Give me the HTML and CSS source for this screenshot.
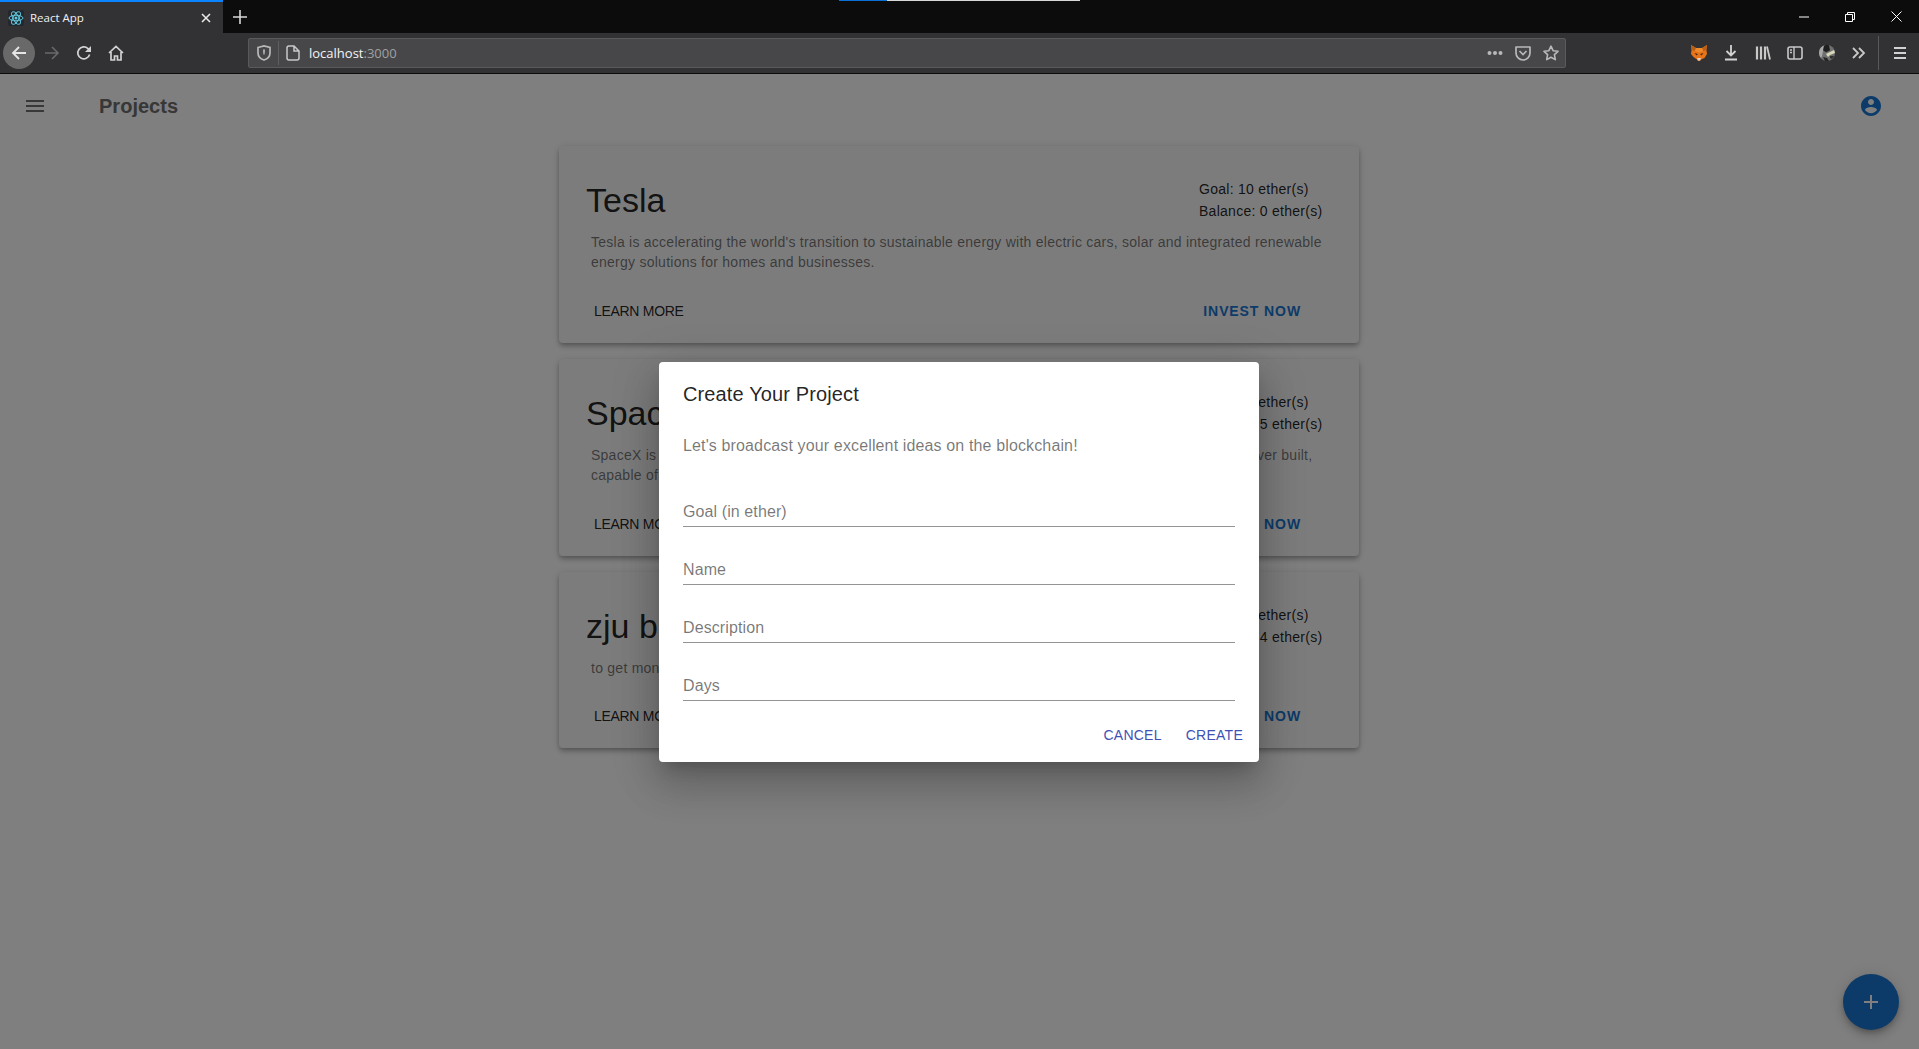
FILE: index.html
```html
<!DOCTYPE html>
<html>
<head>
    <title>React App</title>
    <link rel="stylesheet" href="styles.css">
</head>
<body>
<div class="browser">
    <!-- Tab strip -->
    <div class="tabbar">
        <div class="tab">
            <svg class="favicon" width="16" height="16" viewBox="0 0 16 16">
                <rect width="16" height="16" rx="2" fill="#22282e"/>
                <g fill="none" stroke="#61c8e0" stroke-width="1">
                    <ellipse cx="8" cy="8" rx="7" ry="2.8"/>
                    <ellipse cx="8" cy="8" rx="7" ry="2.8" transform="rotate(60 8 8)"/>
                    <ellipse cx="8" cy="8" rx="7" ry="2.8" transform="rotate(120 8 8)"/>
                </g>
                <circle cx="8" cy="8" r="1.5" fill="#61c8e0"/>
            </svg>
            <span class="tab-title">React App</span>
            <svg class="tab-close" width="12" height="12" viewBox="0 0 12 12">
                <path d="M2 2l8 8M10 2l-8 8" stroke="#e8e8e8" stroke-width="1.6" fill="none"/>
            </svg>
        </div>
        <div class="new-tab">
            <svg width="14" height="14" viewBox="0 0 14 14">
                <path d="M7 0v14M0 7h14" stroke="#d8d8d8" stroke-width="1.6" fill="none"/>
            </svg>
        </div>
        <div class="load-strip"><div class="load-strip-bar"></div></div>
        <div class="window-controls">
            <div class="window-btn">
                <svg width="10" height="10" viewBox="0 0 10 10"><path d="M0 5h10" stroke="#fff" fill="none"/></svg>
            </div>
            <div class="window-btn">
                <svg width="10" height="10" viewBox="0 0 10 10"><path d="M.5 2.5h7v7h-7zM2.5 2.5v-2h7v7h-2" stroke="#fff" fill="none"/></svg>
            </div>
            <div class="window-btn">
                <svg width="11" height="11" viewBox="0 0 11 11"><path d="M.5.5l10 10M10.5.5l-10 10" stroke="#fff" fill="none"/></svg>
            </div>
        </div>
    </div>

    <!-- Navigation toolbar -->
    <div class="toolbar">
        <div class="tool tool-back">
            <svg width="16" height="16" viewBox="0 0 16 16"><path d="M15 8H2M8 2L2 8l6 6" stroke="#e6e6e6" stroke-width="1.8" fill="none"/></svg>
        </div>
        <div class="tool">
            <svg width="16" height="16" viewBox="0 0 16 16"><path d="M1 8h13M8 2l6 6-6 6" stroke="#69696b" stroke-width="1.6" fill="none"/></svg>
        </div>
        <div class="tool">
            <svg width="16" height="16" viewBox="0 0 16 16"><path d="M13.6 9.5A6 6 0 1 1 12 3.6L14 5.6" stroke="#d2d2d3" stroke-width="1.7" fill="none"/><path d="M15 1v6H9z" fill="#d2d2d3"/></svg>
        </div>
        <div class="tool">
            <svg width="16" height="16" viewBox="0 0 16 16"><path d="M1 8l7-6.5L15 8M3 7v8h3.5v-4h3v4H13V7" stroke="#d2d2d3" stroke-width="1.7" fill="none"/></svg>
        </div>

        <div class="urlbar">
            <svg class="url-shield" width="14" height="16" viewBox="0 0 14 16"><path d="M1 2.5L7 1l6 1.500V8c0 3.500-3 6-6 7-3-1-6-3.500-6-7z" stroke="#b8b8b9" stroke-width="1.700" fill="none"/><path d="M6 4.500h2l-.4 5H6.400z" fill="#b8b8b9"/></svg>
            <div class="url-sep"></div>
            <svg class="url-page" width="14" height="16" viewBox="0 0 14 16"><path d="M1 3a2 2 0 0 1 2-2h5l5 5v7a2 2 0 0 1-2 2H3a2 2 0 0 1-2-2zM8 1v5h5" stroke="#c8c8c9" stroke-width="1.500" fill="none"/></svg>
            <span class="url-text">localhost<span class="url-port">:3000</span></span>
            <div class="url-actions">
                <svg width="16" height="16" viewBox="0 0 16 16" fill="#b8b8b9"><circle cx="2.500" cy="8" r="2"/><circle cx="8" cy="8" r="2"/><circle cx="13.500" cy="8" r="2"/></svg>
                <svg width="16" height="16" viewBox="0 0 16 16"><path d="M1 2h14v6a7 7 0 0 1-14 0z" stroke="#b8b8b9" stroke-width="1.700" fill="none" stroke-linejoin="round"/><path d="M4.500 6L8 9.500 11.500 6" stroke="#b8b8b9" stroke-width="1.700" fill="none"/></svg>
                <svg width="16" height="16" viewBox="0 0 16 16"><path d="M8 1.200l2.100 4.500 4.900.6-3.600 3.400.9 4.900L8 12.200l-4.300 2.400.9-4.900L1 6.300l4.900-.6z" stroke="#b8b8b9" stroke-width="1.600" fill="none" stroke-linejoin="round"/></svg>
            </div>
        </div>

        <div class="tool">
            <svg width="16" height="16" viewBox="0 0 16 16">
                <path d="M0 0l5 3h6l5-3-.6 5 .6 4-2.500 4L10 14.500 9 16H7l-1-1.500L2.500 12 0 9l.6-4z" fill="#e8741a"/>
                <path d="M0 0l5 3-1 3-3.400-1zM16 0l-5 3 1 3 3.400-1z" fill="#b85f18"/>
                <path d="M5 3h6l1 3-4 1.500L4 6z" fill="#f08a2a"/>
                <path d="M3.500 8L7 9l-1.500 1.500zM12.500 8L9 9l1.500 1.500z" fill="#4a2a12"/>
                <path d="M6 13h4l-1 2.500H7z" fill="#e0d0c4"/>
            </svg>
        </div>
        <div class="tool">
            <svg width="16" height="16" viewBox="0 0 16 16"><path d="M8 0v10M3.500 6L8 10.500 12.500 6M2 14.500h12" stroke="#d2d2d3" stroke-width="1.800" fill="none"/></svg>
        </div>
        <div class="tool">
            <svg width="16" height="16" viewBox="0 0 16 16"><path d="M2 1.500v13M6 1.500v13M10 1.500v13" stroke="#c8c8c9" stroke-width="2.200" fill="none"/><path d="M12 1.500l3 13" stroke="#c8c8c9" stroke-width="1.800" fill="none"/></svg>
        </div>
        <div class="tool">
            <svg width="16" height="14" viewBox="0 0 16 14"><rect x="1" y="1" width="14" height="12" rx="2" stroke="#c8c8c9" stroke-width="1.600" fill="none"/><path d="M7 1v12M3 4h2M3 6.500h2" stroke="#c8c8c9" stroke-width="1.400" fill="none"/></svg>
        </div>
        <div class="tool">
            <svg width="16" height="16" viewBox="0 0 16 16">
                <circle cx="8" cy="8" r="8" fill="#707071"/>
                <path d="M0 8a8 8 0 0 1 6-7.700l1 2.700-3 3-1 5-1 2a8 8 0 0 1-2-5z" fill="#a8a8a8"/>
                <path d="M5 .6a8 8 0 0 1 5-.4l1 5-4 2-3-2z" fill="#1e1e1f"/>
                <path d="M7 9l8-4 1 3-5 2-2 2z" fill="#d8d8b8"/>
                <path d="M4 12l4 1 2 3H6z" fill="#262627"/>
                <path d="M11 11l4 0-2 3-2-1z" fill="#303031"/>
            </svg>
        </div>
        <div class="tool">
            <svg width="14" height="12" viewBox="0 0 14 12"><path d="M1 1l5 5-5 5M7 1l5 5-5 5" stroke="#c8c8c9" stroke-width="1.800" fill="none"/></svg>
        </div>
        <div class="tool-sep"></div>
        <div class="tool">
            <svg width="14" height="12" viewBox="0 0 14 12"><path d="M1 1h12M1 6h12M1 11h12" stroke="#d2d2d3" stroke-width="1.800" fill="none"/></svg>
        </div>
    </div>
</div>

<div class="viewport">
    <div class="appbar">
        <svg class="appbar-menu" width="24" height="24" viewBox="0 0 24 24"><path d="M3 18h18v-2H3v2zm0-5h18v-2H3v2zm0-7v2h18V6H3z"/></svg>
        <h1 class="appbar-title">Projects</h1>
        <svg class="appbar-account" width="24" height="24" viewBox="0 0 24 24"><path d="M12 2C6.480 2 2 6.480 2 12s4.480 10 10 10 10-4.480 10-10S17.520 2 12 2zm0 3c1.660 0 3 1.340 3 3s-1.340 3-3 3-3-1.340-3-3 1.340-3 3-3zm0 14.200c-2.500 0-4.710-1.280-6-3.220.030-1.990 4-3.080 6-3.080 1.990 0 5.970 1.090 6 3.080-1.290 1.940-3.500 3.220-6 3.220z"/></svg>
    </div>

    <div class="projects">
        <div class="card">
            <div class="card-head">
                <h2 class="card-title">Tesla</h2>
                <div class="card-stats">
                    <div>Goal: 10 ether(s)</div>
                    <div>Balance: 0 ether(s)</div>
                </div>
            </div>
            <p class="card-desc">Tesla is accelerating the world's transition to sustainable energy with electric cars, solar and integrated renewable energy solutions for homes and businesses.</p>
            <div class="card-actions">
                <button class="btn-learn">Learn More</button>
                <button class="btn-invest">Invest Now</button>
            </div>
        </div>

        <div class="card">
            <div class="card-head">
                <h2 class="card-title">SpaceX</h2>
                <div class="card-stats">
                    <div>Goal: 10 ether(s)</div>
                    <div>Balance: 5 ether(s)</div>
                </div>
            </div>
            <p class="card-desc">SpaceX is developing Starship, a fully reusable transportation system and the most powerful launcher ever built, capable of carrying crew and cargo to Earth orbit, the Moon and Mars.</p>
            <div class="card-actions">
                <button class="btn-learn">Learn More</button>
                <button class="btn-invest">Invest Now</button>
            </div>
        </div>

        <div class="card card-short">
            <div class="card-head">
                <h2 class="card-title">zju blockchain</h2>
                <div class="card-stats">
                    <div>Goal: 10 ether(s)</div>
                    <div>Balance: 4 ether(s)</div>
                </div>
            </div>
            <p class="card-desc">to get money for the course project</p>
            <div class="card-actions">
                <button class="btn-learn">Learn More</button>
                <button class="btn-invest">Invest Now</button>
            </div>
        </div>
    </div>

    <button class="fab">
        <svg width="24" height="24" viewBox="0 0 24 24"><path d="M19 13h-6v6h-2v-6H5v-2h6V5h2v6h6v2z"/></svg>
    </button>

    <!-- Create project dialog -->
    <div class="backdrop">
        <div class="dialog">
            <h2 class="dialog-title">Create Your Project</h2>
            <p class="dialog-text">Let's broadcast your excellent ideas on the blockchain!</p>
            <form class="dialog-form">
                <input class="field" type="text" placeholder="Goal (in ether)">
                <input class="field" type="text" placeholder="Name">
                <input class="field" type="text" placeholder="Description">
                <input class="field" type="text" placeholder="Days">
            </form>
            <div class="dialog-actions">
                <button class="btn-dialog">Cancel</button>
                <button class="btn-dialog">Create</button>
            </div>
        </div>
    </div>
</div>
</body>
</html>
```

FILE: styles.css
```css
* {
    box-sizing: border-box;
}

body {
    font-family: "Liberation Sans", Arial, sans-serif;
    margin: 0;
    height: 1049px;
    display: flex;
    flex-direction: column;
    overflow: hidden;
    background-color: #fff;
}

/* browser chrome */
.browser {
    flex: none;
    font-family: "Open Sans", "Noto Sans", sans-serif;
}

.tabbar {
    position: relative;
    display: flex;
    height: 33px;
    background-color: #0c0c0c;
}

.tab {
    display: flex;
    align-items: center;
    width: 223px;
    padding: 0 11px 0 8px;
    background-color: #323234;
    border-top: 2px solid #0a84ff;
    color: #f0f0f0;
    font-size: 11.5px;
}

.favicon {
    flex: none;
}

.tab-title {
    flex: 1;
    margin-left: 6px;
}

.new-tab {
    display: flex;
    align-items: center;
    justify-content: center;
    width: 34px;
}

.load-strip {
    position: absolute;
    top: 0;
    left: 839px;
    width: 241px;
    height: 1px;
    background-color: #d8d8d8;
}

.load-strip-bar {
    width: 48px;
    height: 1px;
    background-color: #0a70d8;
}

.window-controls {
    display: flex;
    margin-left: auto;
}

.window-btn {
    display: flex;
    align-items: center;
    justify-content: center;
    width: 46px;
}

.toolbar {
    display: flex;
    align-items: center;
    height: 41px;
    padding: 0 3px 1px;
    background-color: #323234;
    border-bottom: 1px solid #0c0c0c;
}

.tool {
    display: flex;
    flex: none;
    align-items: center;
    justify-content: center;
    width: 32px;
    height: 32px;
}

.tool-back {
    margin-right: 1px;
    background-color: #69696a;
    border-radius: 50%;
}

.tool-sep {
    flex: none;
    width: 1px;
    height: 34px;
    margin: 0 5px 0 3px;
    background-color: #58585a;
}

.urlbar {
    display: flex;
    flex: 1;
    align-items: center;
    height: 30px;
    margin: 0 117px 0 116px;
    padding: 0 6px 0 8px;
    background-color: #474749;
    border: 1px solid #5a5a5c;
    border-radius: 2px;
    font-size: 13px;
    color: #f4f4f4;
}

.url-sep {
    width: 1px;
    height: 24px;
    margin: 0 7px;
    background-color: #5f5f61;
}

.url-text {
    margin-left: 9px;
}

.url-port {
    color: #a0a0a1;
}

.url-actions {
    display: flex;
    gap: 12px;
    margin-left: auto;
}

/* page */
.viewport {
    position: relative;
    flex: 1;
}

.appbar {
    display: flex;
    align-items: center;
    height: 64px;
    padding: 0 36px 0 23px;
}

.appbar-menu {
    fill: #707070;
}

.appbar-title {
    margin: 0 0 0 52px;
    font-size: 20px;
    font-weight: bold;
    letter-spacing: 0.02px;
    color: #6e6e6e;
}

.appbar-account {
    margin-left: auto;
    fill: #1976d2;
}

.projects {
    display: flex;
    flex-direction: column;
    gap: 16px;
    width: 800px;
    margin: 8px 0 0 559px;
}

.card {
    padding: 32px 8px 14px 27px;
    background-color: #f8f8f8;
    border-radius: 4px;
    box-shadow: 0 2px 4px -1px rgba(0, 0, 0, 0.2), 0 4px 5px 0 rgba(0, 0, 0, 0.14), 0 1px 10px 0 rgba(0, 0, 0, 0.12);
}

.card-head {
    display: flex;
    justify-content: space-between;
}

.card-title {
    margin: 2px 0 0;
    font-size: 34px;
    font-weight: normal;
    line-height: 40px;
    color: rgba(0, 0, 0, 0.87);
}

.card-stats {
    width: 152px;
    font-size: 14px;
    line-height: 22px;
    letter-spacing: 0.27px;
    color: rgba(0, 0, 0, 0.87);
}

.card-desc {
    width: 732px;
    margin: 10px 0 0 5px;
    font-size: 14px;
    line-height: 20px;
    letter-spacing: 0.25px;
    color: rgba(0, 0, 0, 0.54);
}

.card-actions {
    display: flex;
    justify-content: space-between;
    margin-top: 21px;
    padding-right: 42px;
}

.card-short .card-actions {
    margin-top: 20px;
}

.card-actions button {
    height: 36px;
    padding: 0 8px;
    border: none;
    background: none;
    font-family: inherit;
    font-size: 14px;
    text-transform: uppercase;
}

.card-actions .btn-learn {
    letter-spacing: -0.3px;
    color: rgba(0, 0, 0, 0.87);
}

.card-actions .btn-invest {
    font-weight: bold;
    letter-spacing: 0.9px;
    color: #1976d2;
}

.fab {
    position: absolute;
    right: 20px;
    bottom: 19px;
    display: flex;
    align-items: center;
    justify-content: center;
    width: 56px;
    height: 56px;
    padding: 0;
    border: none;
    border-radius: 50%;
    background-color: #1976d2;
    box-shadow: 0 3px 5px -1px rgba(0, 0, 0, 0.2), 0 6px 10px 0 rgba(0, 0, 0, 0.14), 0 1px 18px 0 rgba(0, 0, 0, 0.12);
    fill: #fff;
}

/* dialog over the page */
.backdrop {
    position: absolute;
    top: 0;
    right: 0;
    bottom: 0;
    left: 0;
    display: flex;
    align-items: center;
    justify-content: center;
    padding: 1px 1px 0 0;
    background-color: rgba(0, 0, 0, 0.5);
}

.dialog {
    width: 600px;
    height: 400px;
    padding: 16px 24px 0;
    background-color: #fff;
    border-radius: 4px;
    box-shadow: 0 11px 15px -7px rgba(0, 0, 0, 0.2), 0 24px 38px 3px rgba(0, 0, 0, 0.14), 0 9px 46px 8px rgba(0, 0, 0, 0.12);
}

.dialog-title {
    margin: 0;
    font-size: 20px;
    font-weight: normal;
    line-height: 32px;
    letter-spacing: 0.13px;
    color: rgba(0, 0, 0, 0.87);
}

.dialog-text {
    margin: 24px 0 0;
    font-size: 16px;
    line-height: 24px;
    letter-spacing: 0.135px;
    color: rgba(0, 0, 0, 0.54);
}

.dialog-form {
    display: flex;
    flex-direction: column;
    gap: 26px;
    margin-top: 37px;
}

.field {
    width: 100%;
    height: 32px;
    padding: 2px 0 0;
    border: none;
    border-bottom: 1px solid rgba(0, 0, 0, 0.42);
    outline: none;
    font-family: inherit;
    font-size: 16px;
    letter-spacing: 0.1px;
}

.field::placeholder {
    color: rgba(0, 0, 0, 0.54);
    opacity: 1;
}

.dialog-actions {
    display: flex;
    justify-content: flex-end;
    gap: 8px;
    margin: 16px -16px 0 0;
}

.btn-dialog {
    height: 36px;
    padding: 0 8px;
    border: none;
    background: none;
    font-family: inherit;
    font-size: 14px;
    letter-spacing: 0.25px;
    text-transform: uppercase;
    color: #3f51b5;
}
```
